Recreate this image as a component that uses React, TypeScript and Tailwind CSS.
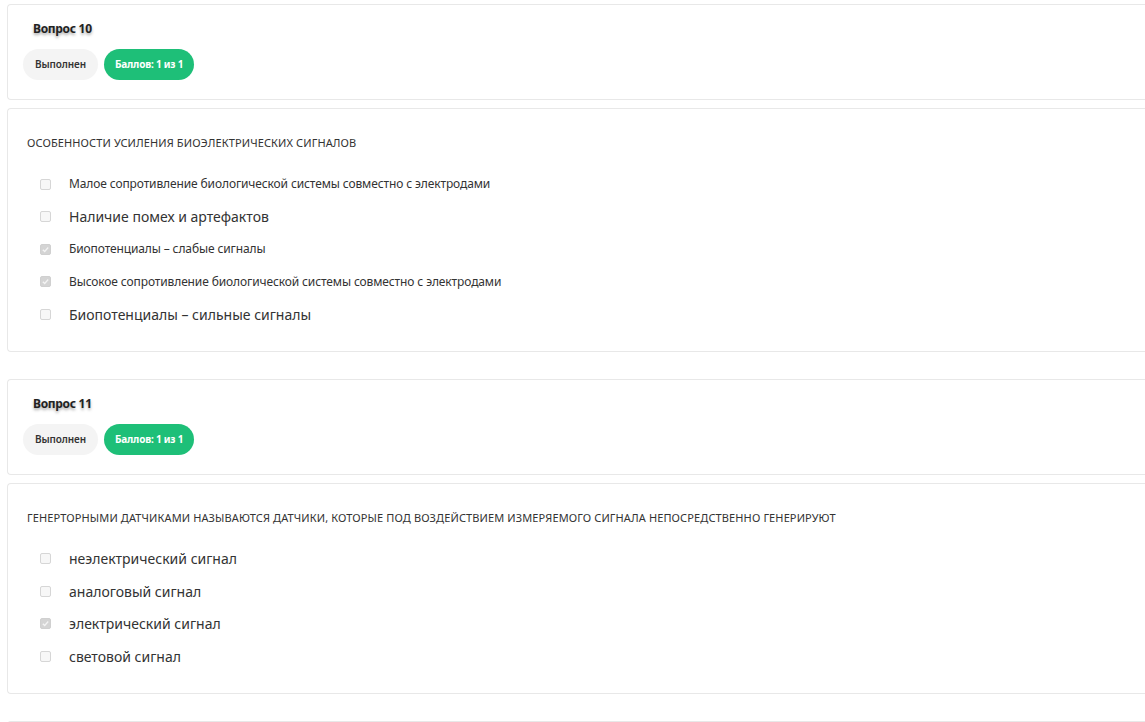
import React from "react";

type Opt = { text: string; checked: boolean; big: boolean };

const font = { fontFamily: '"Noto Sans", "Open Sans", sans-serif' };

function Header({ n }: { n: number }) {
  return (
    <div className="h-[96px] border border-r-0 border-[#e8e8e8] rounded-l-[4px] bg-white pl-[15px] pt-[15px]">
      <div className="pl-[10px] text-[12px] font-bold leading-[18px] text-[#222] [text-shadow:0_2px_3px_rgba(0,0,0,0.35)] tracking-[-0.3px]">
        Вопрос {n}
      </div>
      <div className="mt-[11px] flex gap-[6px]">
        <span className="h-[31px] px-[12px] rounded-full bg-[#f4f4f4] text-[10px] font-semibold text-[#333] flex items-center tracking-[-0.1px]">
          Выполнен
        </span>
        <span className="h-[31px] px-[11px] rounded-full bg-[#1ebf78] text-[10px] font-bold text-white flex items-center tracking-[-0.2px]">
          Баллов: 1 из 1
        </span>
      </div>
    </div>
  );
}

function Box({ checked }: { checked: boolean }) {
  return (
    <span
      className={
        "w-[11px] h-[11px] rounded-[2px] border flex items-center justify-center shrink-0 " +
        (checked ? "bg-[#d4d4d4] border-[#d0d0d0]" : "bg-[#f7f7f7] border-[#d6d6d6]")
      }
    >
      {checked && (
        <svg width="9" height="9" viewBox="0 0 10 10">
          <path d="M2 5.2 L4.1 7.2 L8 2.8" fill="none" stroke="#f4f4f4" strokeWidth="1.4" />
        </svg>
      )}
    </span>
  );
}

function Question({ title, opts }: { title: string; opts: Opt[] }) {
  return (
    <div className="border border-r-0 border-[#e8e8e8] rounded-l-[4px] bg-white pl-[19px] pt-[26px] pb-[20px]">
      <div className="text-[11px] leading-[16px] text-[#333] tracking-[0.12px] uppercase">{title}</div>
      <div className="mt-[17px] pl-[13px] flex flex-col">
        {opts.map((o, i) => (
          <div key={i} className="h-[32.5px] flex items-center">
            <Box checked={o.checked} />
            <span
              className={
                "ml-[18px] text-[#333] " +
                (o.big ? "text-[14px] tracking-[0px]" : "text-[12px] tracking-[-0.12px]")
              }
            >
              {o.text}
            </span>
          </div>
        ))}
      </div>
    </div>
  );
}

export default function App() {
  return (
    <div className="w-[1145px] h-[722px] overflow-hidden bg-white" style={font}>
      <div className="pl-[7px] pt-[4px] w-[1160px]">
        <Header n={10} />
        <div className="h-[8px]" />
        <Question
          title="Особенности усиления биоэлектрических сигналов"
          opts={[
            { text: "Малое сопротивление биологической системы совместно с электродами", checked: false, big: false },
            { text: "Наличие помех и артефактов", checked: false, big: true },
            { text: "Биопотенциалы – слабые сигналы", checked: true, big: false },
            { text: "Высокое сопротивление биологической системы совместно с электродами", checked: true, big: false },
            { text: "Биопотенциалы – сильные сигналы", checked: false, big: true },
          ]}
        />
        <div className="h-[27px]" />
        <Header n={11} />
        <div className="h-[8px]" />
        <Question
          title="генерторными датчиками называются датчики, которые под воздействием измеряемого сигнала непосредственно генерируют"
          opts={[
            { text: "неэлектрический сигнал", checked: false, big: true },
            { text: "аналоговый сигнал", checked: false, big: true },
            { text: "электрический сигнал", checked: true, big: true },
            { text: "световой сигнал", checked: false, big: true },
          ]}
        />
        <div className="h-[27px]" />
        <div className="h-[60px] border border-r-0 border-[#e8e8e8] rounded-l-[4px]" />
      </div>
    </div>
  );
}
